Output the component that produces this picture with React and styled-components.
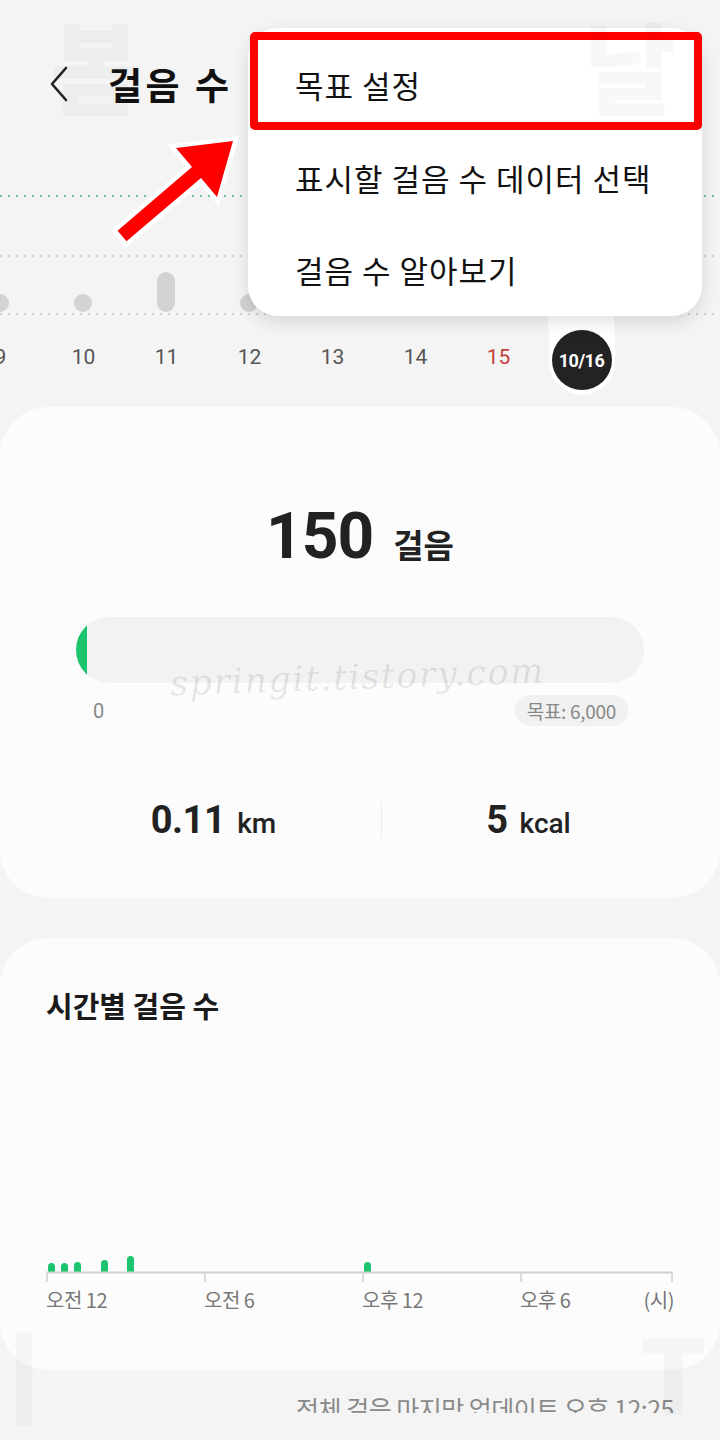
import React from 'react';
import styled, { createGlobalStyle } from 'styled-components';

const GlobalStyle = createGlobalStyle`
  body {
    margin: 0;
    background: #f4f4f4;
    font-family: "Noto Sans CJK KR", "Noto Sans", sans-serif;
    color: #1a1a1a;
  }
`;

const Page = styled.div`
  position: relative;
  isolation: isolate;
  width: 720px;
  height: 1440px;
  overflow: hidden;
  background: #f4f4f4;
`;

const Header = styled.div`
  display: flex;
  align-items: center;
  height: 68px;
  padding: 50px 0 0 48px;
`;

const BackButton = styled.div`
  display: flex;
  align-items: center;
  width: 22px;
  height: 40px;
`;

const Title = styled.h1`
  margin: 0 0 0 38px;
  font-size: 37px;
  font-weight: 700;
  letter-spacing: 3.5px;
  color: #111;
`;

const Trend = styled.div`
  height: 212px;
`;

const DateRow = styled.div`
  display: flex;
  margin-left: -41px;
  height: 65px;
`;

const DateCell = styled.div`
  flex: 0 0 83px;
  display: flex;
  justify-content: center;
  align-items: flex-start;
`;

const DateLabel = styled.span`
  margin-top: 15px;
  font-family: Roboto, "Noto Sans", sans-serif;
  font-size: 21px;
  color: ${p => (p.$red ? '#c2413c' : '#555')};
`;

const SelectedWrap = styled.div`
  width: 66px;
  height: 65px;
  background: #fff;
  border-radius: 0 0 33px 33px;
  display: flex;
  justify-content: center;
`;

const TodayCircle = styled.div`
  width: 60px;
  height: 60px;
  border-radius: 50%;
  background: #232323;
  color: #fff;
  display: flex;
  align-items: center;
  justify-content: center;
  font-family: Roboto, sans-serif;
  font-weight: 700;
  font-size: 18px;
  letter-spacing: -0.5px;
`;

const Card = styled.section`
  margin-top: ${p => p.$top}px;
  height: ${p => p.$height}px;
  background: #fcfcfc;
  border-radius: 48px;
  position: relative;
  box-sizing: border-box;
`;

const CountRow = styled.div`
  display: flex;
  justify-content: center;
  align-items: baseline;
  padding-top: 92px;
  height: 80px;
`;

const CountValue = styled.span`
  font-family: Roboto, sans-serif;
  font-weight: 700;
  font-size: 64px;
  letter-spacing: -1px;
  color: #222;
`;

const CountUnit = styled.span`
  margin-left: 20px;
  font-size: 33px;
  font-weight: 700;
  color: #222;
`;

const Progress = styled.div`
  margin: 38px 76px 0;
  height: 66px;
  border-radius: 33px;
  background: #f2f2f2;
  overflow: hidden;
  display: flex;
`;

const ProgressFill = styled.div`
  height: 100%;
  background: #1dc46e;
  border-radius: 33px 0 0 33px;
`;

const ScaleRow = styled.div`
  display: flex;
  justify-content: space-between;
  align-items: center;
  margin: 12px 92px 0 92px;
`;

const ScaleMin = styled.span`
  font-family: Roboto, sans-serif;
  font-size: 20px;
  color: #888;
  padding-left: 1px;
`;

const GoalPill = styled.span`
  font-size: 19px;
  color: #888;
  background: #f1f1f1;
  border-radius: 15px;
  padding: 2px 12px;
  letter-spacing: -0.3px;
`;

const Watermark = styled.div`
  position: absolute;
  left: 170px;
  top: 250px;
  font-family: "DejaVu Serif", serif;
  font-style: italic;
  font-size: 35px;
  letter-spacing: 1.5px;
  color: rgba(0, 0, 0, 0.09);
  transform: rotate(-2deg);
  pointer-events: none;
`;

const StatsRow = styled.div`
  display: grid;
  grid-template-columns: 335px 1px 293px;
  align-items: center;
  padding-left: 46px;
  margin-top: 72px;
`;

const Stat = styled.div`
  display: flex;
  justify-content: center;
  align-items: baseline;
  color: #222;
`;

const StatValue = styled.span`
  font-family: Roboto, sans-serif;
  font-weight: 700;
  font-size: 38px;
  letter-spacing: -0.5px;
`;

const StatUnit = styled.span`
  margin-left: 12px;
  font-family: Roboto, sans-serif;
  font-weight: 500;
  font-size: 28px;
`;

const Divider = styled.div`
  height: 34px;
  background: #ececec;
`;

const SectionTitle = styled.h2`
  margin: 0;
  padding: 46px 0 0 46px;
  font-size: 29px;
  font-weight: 700;
  color: #1a1a1a;
`;

const HourChart = styled.div`
  margin: 246px 46px 0 46px;
`;

const HourLabels = styled.div`
  display: grid;
  grid-template-columns: 158px 158px 158px 1fr auto;
  margin-top: 1px;
  font-size: 20px;
  color: #777;
  letter-spacing: -0.5px;
`;

const HourLabel = styled.span`
  text-align: left;
`;

const Footer = styled.div`
  height: 43px;
  box-sizing: border-box;
  overflow: hidden;
  display: flex;
  justify-content: flex-end;
  align-items: flex-start;
  padding: 20px 46px 0 0;
`;

const FooterText = styled.span`
  font-size: 25px;
  color: #8a8a8a;
  letter-spacing: -0.5px;
`;

const Menu = styled.div`
  position: absolute;
  left: 248px;
  top: 28px;
  width: 454px;
  height: 288px;
  background: #fff;
  border-radius: 30px;
  box-shadow: 0 6px 18px rgba(0, 0, 0, 0.12);
  display: flex;
  flex-direction: column;
  padding-top: 10px;
  box-sizing: border-box;
`;

const MenuItem = styled.div`
  height: 93px;
  display: flex;
  align-items: center;
  padding-left: 47px;
  font-size: 31px;
  letter-spacing: 1px;
  color: #111;
`;

const Highlight = styled.div`
  position: absolute;
  left: 250px;
  top: 32px;
  width: 452px;
  height: 98px;
  border: 8px solid #ff0000;
  border-radius: 5px;
  box-sizing: border-box;
`;

const Arrow = styled.svg`
  position: absolute;
  left: 0;
  top: 0;
`;

const Ghost = styled.div`
  position: absolute;
  z-index: ${p => (p.$front ? 3 : -1)};
  left: ${p => p.$x}px;
  top: ${p => p.$y}px;
  font-size: ${p => p.$size}px;
  font-weight: 900;
  line-height: 1;
  color: rgba(0, 0, 0, 0.028);
  pointer-events: none;
`;

const dates = [
  { d: '9' },
  { d: '10' },
  { d: '11' },
  { d: '12' },
  { d: '13' },
  { d: '14' },
  { d: '15', red: true },
  { d: '10/16', today: true },
];

const hourBars = [
  { x: 2, h: 9 },
  { x: 15, h: 9 },
  { x: 28, h: 10 },
  { x: 55, h: 12 },
  { x: 81, h: 16 },
  { x: 318, h: 10 },
];

export default function App() {
  return (
    <Page>
      <GlobalStyle />
      <Ghost $x={50} $y={14} $size={100}>봄</Ghost>

      <Header>
        <BackButton>
          <svg width="22" height="38" viewBox="0 0 22 38">
            <path d="M18 3 L4 19 L18 35" fill="none" stroke="#222" strokeWidth="2.6" strokeLinecap="round" strokeLinejoin="round" />
          </svg>
        </BackButton>
        <Title>걸음 수</Title>
      </Header>

      <Trend>
        <svg width="720" height="212" viewBox="0 0 720 212">
          <rect x="548" y="12" width="66" height="200" fill="#fff" />
          <line x1="0" y1="78" x2="720" y2="78" stroke="#6dbf9c" strokeWidth="2" strokeDasharray="2 6" />
          <line x1="0" y1="138" x2="720" y2="138" stroke="#cfcfcf" strokeWidth="2" strokeDasharray="2 6" />
          <line x1="0" y1="196" x2="720" y2="196" stroke="#cfcfcf" strokeWidth="2" strokeDasharray="2 6" />
          <circle cx="0" cy="185" r="9" fill="#d3d3d3" />
          <circle cx="83" cy="185" r="9" fill="#d3d3d3" />
          <rect x="157" y="154" width="18" height="40" rx="9" fill="#d3d3d3" />
          <circle cx="249" cy="185" r="9" fill="#d3d3d3" />
        </svg>
      </Trend>

      <DateRow>
        {dates.map(item => (
          <DateCell key={item.d}>
            {item.today ? (
              <SelectedWrap>
                <TodayCircle>{item.d}</TodayCircle>
              </SelectedWrap>
            ) : (
              <DateLabel $red={item.red}>{item.d}</DateLabel>
            )}
          </DateCell>
        ))}
      </DateRow>

      <Card $top={12} $height={491}>
        <CountRow>
          <CountValue>150</CountValue>
          <CountUnit>걸음</CountUnit>
        </CountRow>
        <Progress>
          <ProgressFill style={{ width: `${(150 / 6000) * 100 * 0.8}%` }} />
        </Progress>
        <ScaleRow>
          <ScaleMin>0</ScaleMin>
          <GoalPill>목표: 6,000</GoalPill>
        </ScaleRow>
        <Watermark>springit.tistory.com</Watermark>
        <StatsRow>
          <Stat>
            <StatValue>0.11</StatValue>
            <StatUnit>km</StatUnit>
          </Stat>
          <Divider />
          <Stat>
            <StatValue>5</StatValue>
            <StatUnit>kcal</StatUnit>
          </Stat>
        </StatsRow>
      </Card>

      <Card $top={40} $height={432}>
        <SectionTitle>시간별 걸음 수</SectionTitle>
        <HourChart>
          <svg width="628" height="12" viewBox="0 0 628 12" style={{ display: 'block', overflow: 'visible' }}>
            {hourBars.map(b => (
              <path
                key={b.x}
                d={`M${b.x} 0 v${-(b.h - 3.5)} a3.5 3.5 0 0 1 7 0 v${b.h - 3.5} z`}
                fill="#1dc46e"
              />
            ))}
            <line x1="0" y1="0.5" x2="627" y2="0.5" stroke="#d0d0d0" strokeWidth="2" />
            {[1, 159, 317, 475, 626].map(x => (
              <line key={x} x1={x} y1="0" x2={x} y2="10" stroke="#d0d0d0" strokeWidth="1.5" />
            ))}
          </svg>
          <HourLabels>
            <HourLabel>오전 12</HourLabel>
            <HourLabel>오전 6</HourLabel>
            <HourLabel>오후 12</HourLabel>
            <HourLabel>오후 6</HourLabel>
            <HourLabel>(시)</HourLabel>
          </HourLabels>
        </HourChart>
      </Card>

      <Footer>
        <FooterText>전체 걸음 마지막 업데이트 오후 12:25</FooterText>
      </Footer>

      <Menu>
        <MenuItem>목표 설정</MenuItem>
        <MenuItem>표시할 걸음 수 데이터 선택</MenuItem>
        <MenuItem>걸음 수 알아보기</MenuItem>
      </Menu>

      <Highlight />

      <Arrow width="720" height="300" viewBox="0 0 720 300">
        <polygon
          points="117.5,230.7 192,167 176,148 233,141 217,197 201,178 126.5,241.3"
          fill="#ff0000"
          stroke="#fff"
          strokeWidth="9"
          strokeLinejoin="miter"
          paintOrder="stroke"
        />
      </Arrow>

      <Ghost $front $x={584} $y={14} $size={100}>날</Ghost>
      <Ghost $front $x={-22} $y={1324} $size={100}>ㅣ</Ghost>
      <Ghost $front $x={640} $y={1318} $size={104}>T</Ghost>
    </Page>
  );
}
